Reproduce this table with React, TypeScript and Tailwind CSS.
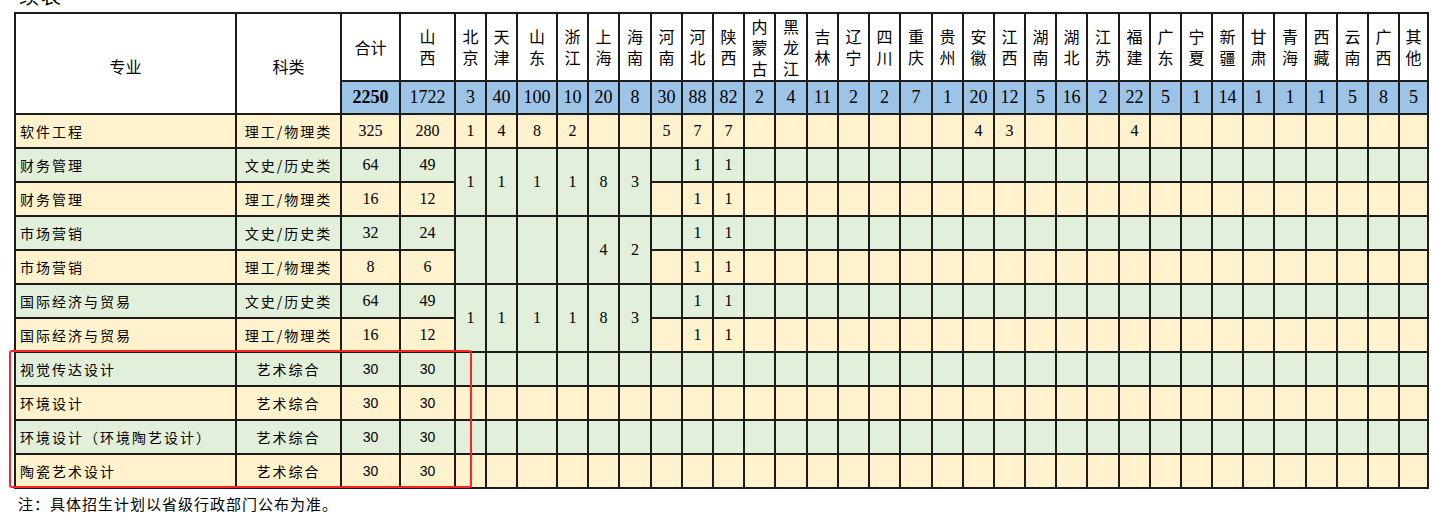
import React from 'react';

const Y = 'bg-[#fff2cc]';
const G = 'bg-[#e2efda]';
const B = 'bg-[#9dc3e6]';

const cell = 'border-2 border-[#1c1c1c] p-0 text-center align-middle';
const num = "font-['Liberation_Serif','Noto_Sans_CJK_SC',serif] text-[16px]";

const PROVINCES: { name: string; w: string; total: string }[] = [
  { name: '北京', w: 'w-[31px]', total: '3' },
  { name: '天津', w: 'w-[31px]', total: '40' },
  { name: '山东', w: 'w-[40px]', total: '100' },
  { name: '浙江', w: 'w-[31px]', total: '10' },
  { name: '上海', w: 'w-[31px]', total: '20' },
  { name: '海南', w: 'w-[32px]', total: '8' },
  { name: '河南', w: 'w-[31px]', total: '30' },
  { name: '河北', w: 'w-[31px]', total: '88' },
  { name: '陕西', w: 'w-[31px]', total: '82' },
  { name: '内蒙古', w: 'w-[31px]', total: '2' },
  { name: '黑龙江', w: 'w-[32px]', total: '4' },
  { name: '吉林', w: 'w-[31px]', total: '11' },
  { name: '辽宁', w: 'w-[31px]', total: '2' },
  { name: '四川', w: 'w-[31px]', total: '2' },
  { name: '重庆', w: 'w-[32px]', total: '7' },
  { name: '贵州', w: 'w-[31px]', total: '1' },
  { name: '安徽', w: 'w-[31px]', total: '20' },
  { name: '江西', w: 'w-[31px]', total: '12' },
  { name: '湖南', w: 'w-[31px]', total: '5' },
  { name: '湖北', w: 'w-[31px]', total: '16' },
  { name: '江苏', w: 'w-[32px]', total: '2' },
  { name: '福建', w: 'w-[31px]', total: '22' },
  { name: '广东', w: 'w-[31px]', total: '5' },
  { name: '宁夏', w: 'w-[31px]', total: '1' },
  { name: '新疆', w: 'w-[31px]', total: '14' },
  { name: '甘肃', w: 'w-[31px]', total: '1' },
  { name: '青海', w: 'w-[32px]', total: '1' },
  { name: '西藏', w: 'w-[31px]', total: '1' },
  { name: '云南', w: 'w-[31px]', total: '5' },
  { name: '广西', w: 'w-[31px]', total: '8' },
  { name: '其他', w: 'w-[29px]', total: '5' },
];

type Row = {
  major: string;
  cat: string;
  total: string;
  sx: string;
  bg: string;
  art?: boolean;
  vals: Record<number, string>;
  merged?: string[];
  skipMerged?: boolean;
};

const ROWS: Row[] = [
  { major: '软件工程', cat: '理工/物理类', total: '325', sx: '280', bg: Y, vals: { 0: '1', 1: '4', 2: '8', 3: '2', 6: '5', 7: '7', 8: '7', 16: '4', 17: '3', 21: '4' } },
  { major: '财务管理', cat: '文史/历史类', total: '64', sx: '49', bg: G, vals: { 7: '1', 8: '1' }, merged: ['1', '1', '1', '1', '8', '3'] },
  { major: '财务管理', cat: '理工/物理类', total: '16', sx: '12', bg: Y, vals: { 7: '1', 8: '1' }, skipMerged: true },
  { major: '市场营销', cat: '文史/历史类', total: '32', sx: '24', bg: G, vals: { 7: '1', 8: '1' }, merged: ['', '', '', '', '4', '2'] },
  { major: '市场营销', cat: '理工/物理类', total: '8', sx: '6', bg: Y, vals: { 7: '1', 8: '1' }, skipMerged: true },
  { major: '国际经济与贸易', cat: '文史/历史类', total: '64', sx: '49', bg: G, vals: { 7: '1', 8: '1' }, merged: ['1', '1', '1', '1', '8', '3'] },
  { major: '国际经济与贸易', cat: '理工/物理类', total: '16', sx: '12', bg: Y, vals: { 7: '1', 8: '1' }, skipMerged: true },
  { major: '视觉传达设计', cat: '艺术综合', total: '30', sx: '30', bg: G, art: true, vals: {} },
  { major: '环境设计', cat: '艺术综合', total: '30', sx: '30', bg: Y, art: true, vals: {} },
  { major: '环境设计（环境陶艺设计）', cat: '艺术综合', total: '30', sx: '30', bg: G, art: true, vals: {} },
  { major: '陶瓷艺术设计', cat: '艺术综合', total: '30', sx: '30', bg: Y, art: true, vals: {} },
];

const Stacked: React.FC<{ text: string }> = ({ text }) => (
  <div className="flex flex-col items-center leading-[21px]">
    {text.split('').map((c, i) => (
      <span key={i}>{c}</span>
    ))}
  </div>
);

const DataRow: React.FC<{ row: Row }> = ({ row }) => {
  const artNum = "font-['Liberation_Sans','Noto_Sans_CJK_SC',sans-serif] text-[14px]";
  return (
    <tr className="h-[34px]">
      <td className={`${cell} ${row.bg} text-left pl-[4px] text-[14px] tracking-[2px] whitespace-nowrap`}>{row.major}</td>
      <td className={`${cell} ${row.bg} text-[14px] tracking-[2px] whitespace-nowrap`}>{row.cat}</td>
      <td className={`${cell} ${row.bg} ${row.art ? artNum : num}`}>{row.total}</td>
      <td className={`${cell} ${row.bg} ${row.art ? artNum : num}`}>{row.sx}</td>
      {PROVINCES.map((p, i) => {
        if (i < 6 && row.skipMerged) return null;
        if (i < 6 && row.merged) {
          return (
            <td key={p.name} rowSpan={2} className={`${cell} ${G} ${num}`}>
              {row.merged[i]}
            </td>
          );
        }
        return (
          <td key={p.name} className={`${cell} ${row.bg} ${num}`}>
            {row.vals[i] ?? ''}
          </td>
        );
      })}
    </tr>
  );
};

export default function App() {
  return (
    <div className="relative w-[1434px] h-[528px] bg-white overflow-hidden text-black font-['Noto_Sans_CJK_SC',sans-serif]">
      <div className="h-[12px] overflow-hidden pl-[19px]">
        <div className="mt-[-14px] text-[20px] leading-[20px] tracking-[2px]">续表</div>
      </div>

      <table className="ml-[14px] border-collapse table-fixed w-[1413px]">
        <colgroup>
          <col className="w-[221px]" />
          <col className="w-[105px]" />
          <col className="w-[59px]" />
          <col className="w-[55px]" />
          {PROVINCES.map(p => (
            <col key={p.name} className={p.w} />
          ))}
        </colgroup>
        <tbody>
          <tr className="h-[68px] text-[16px]">
            <td rowSpan={2} className={`${cell} bg-white pt-[4px]`}>专业</td>
            <td rowSpan={2} className={`${cell} bg-white pt-[4px]`}>科类</td>
            <td className={`${cell} bg-white`}>合计</td>
            <td className={`${cell} bg-white`}>
              <Stacked text="山西" />
            </td>
            {PROVINCES.map(p => (
              <td key={p.name} className={`${cell} bg-white`}>
                <Stacked text={p.name} />
              </td>
            ))}
          </tr>
          <tr className="h-[33px]">
            <td className={`${cell} ${B} font-['Liberation_Serif',serif] text-[18px] font-bold`}>2250</td>
            <td className={`${cell} ${B} font-['Liberation_Serif',serif] text-[18px]`}>1722</td>
            {PROVINCES.map(p => (
              <td key={p.name} className={`${cell} ${B} font-['Liberation_Serif',serif] text-[18px]`}>
                {p.total}
              </td>
            ))}
          </tr>
          {ROWS.map((r, i) => (
            <DataRow key={i} row={r} />
          ))}
        </tbody>
      </table>

      <p className="pl-[18px] mt-[5px] text-[15px] leading-[20px] tracking-[1px]">注：具体招生计划以省级行政部门公布为准。</p>

      {/* red highlight around art rows */}
      <div className="absolute left-[9px] top-[350px] w-[463px] h-[138px] border-2 border-[#ff2424] rounded-[3px] pointer-events-none" />
    </div>
  );
}
